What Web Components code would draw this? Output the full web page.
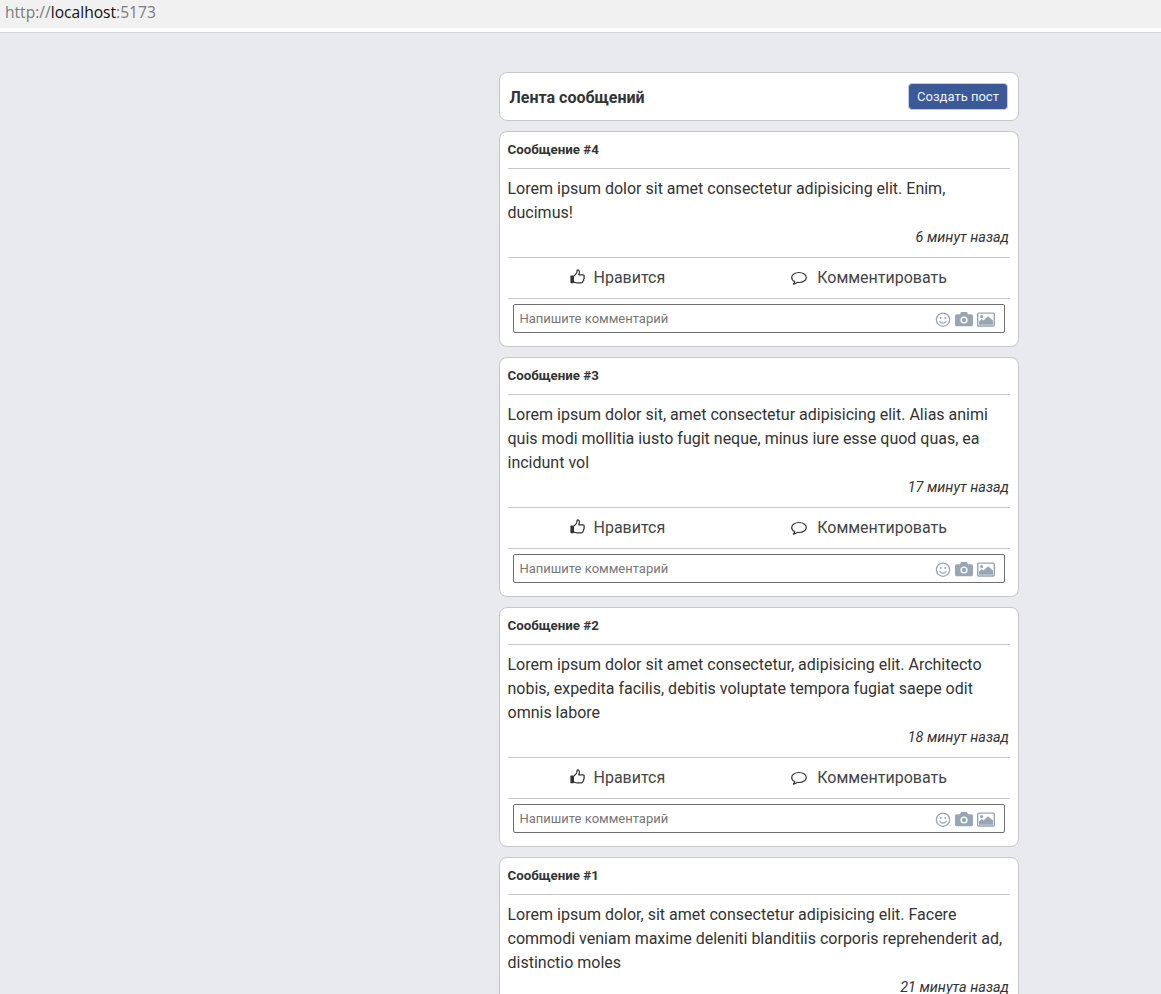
<!DOCTYPE html>
<html lang="ru">
<head>
<meta charset="utf-8">
<title>Лента сообщений</title>
<style>
  html, body { margin: 0; height: 994px; overflow: hidden; }
  body { background: #e9eaee; font-family: Roboto, "Liberation Sans", sans-serif; color: #333; }
</style>
</head>
<body>
<browser-bar>
  <span slot="scheme">http://</span><span slot="host">localhost</span><span slot="port">:5173</span>
</browser-bar>
<feed-page>
  <feed-header heading="Лента сообщений" action="Создать пост"></feed-header>
  <post-card heading="Сообщение #4" time="6 минут назад">Lorem ipsum dolor sit amet consectetur adipisicing elit. Enim, ducimus!</post-card>
  <post-card heading="Сообщение #3" time="17 минут назад">Lorem ipsum dolor sit, amet consectetur adipisicing elit. Alias animi quis modi mollitia iusto fugit neque, minus iure esse quod quas, ea incidunt vol</post-card>
  <post-card heading="Сообщение #2" time="18 минут назад">Lorem ipsum dolor sit amet consectetur, adipisicing elit. Architecto nobis, expedita facilis, debitis voluptate tempora fugiat saepe odit omnis labore</post-card>
  <post-card heading="Сообщение #1" time="21 минута назад">Lorem ipsum dolor, sit amet consectetur adipisicing elit. Facere commodi veniam maxime deleniti blanditiis corporis reprehenderit ad, distinctio moles</post-card>
</feed-page>

<script>
const ICONS = {
  like: `<svg width="15" height="16" viewBox="0.6 0.4 15 16"><rect x="1" y="7" width="3.600" height="7.600" rx=".6" fill="#333"/><path d="M4.600 7.600 7 4.800C7.700 3.900 7.500 2.600 7.800 1.400 9.500 1.100 10.400 2.700 9.900 4.400L9.300 6.200H13.400C14.700 6.200 15.200 7.600 14.500 8.400 15.100 9.100 14.900 10.200 14.200 10.600 14.500 11.400 14.100 12.300 13.400 12.600 13.500 13.600 12.900 14.300 12 14.300H7.600C6.300 14.300 5.600 13.700 4.600 13.600" fill="none" stroke="#333" stroke-width="1.200" stroke-linejoin="round"/></svg>`,
  comment: `<svg width="18" height="16" viewBox="0 -1.300 18 16"><path d="M8 2.200C3.900 2.200.7 4.300.7 7.100c0 1.800 1.200 3.300 3 4.200-.1.900-.6 1.700-1.300 2.600 1.600-.2 3-.9 3.900-1.800.5.1 1.100.1 1.700.1 4.100 0 7.300-2.300 7.300-5.100S12.100 2.200 8 2.200Z" fill="none" stroke="#333" stroke-width="1.200" stroke-linejoin="round"/></svg>`,
  smile: `<svg width="16" height="18" viewBox="0 -1.700 16 18"><circle cx="8" cy="8" r="6.600" fill="none" stroke="#98a5b3" stroke-width="1.300"/><circle cx="5.700" cy="6.300" r="1" fill="#98a5b3"/><circle cx="10.300" cy="6.300" r="1" fill="#98a5b3"/><path d="M4.800 9.600C5.500 10.900 6.700 11.500 8 11.500S10.500 10.900 11.200 9.600" fill="none" stroke="#98a5b3" stroke-width="1.200" stroke-linecap="round"/></svg>`,
  camera: `<svg width="18" height="18" viewBox="0 -1 18 18"><path d="M1.800 3.200H5L6 1H12L13 3.200H16.200C17.300 3.200 18 3.900 18 5V13.500C18 14.600 17.300 15.300 16.200 15.300H1.800C.7 15.300 0 14.600 0 13.500V5C0 3.900 .7 3.200 1.800 3.200Z" fill="#98a5b3"/><circle cx="9" cy="9" r="3.600" fill="#fff"/><circle cx="9" cy="9" r="2.200" fill="#98a5b3"/></svg>`,
  image: `<svg width="18" height="18" viewBox="0 -0.400 18 18"><rect x=".7" y="2.700" width="16.600" height="12.900" rx="1" fill="#fff" stroke="#98a5b3" stroke-width="1.400"/><circle cx="4.600" cy="6.100" r="1.600" fill="#98a5b3"/><path d="M2 14.300V11L4.800 8.700 6.500 10.200 11 5.800 16 10.200V14.300Z" fill="#98a5b3"/></svg>`
};

class BrowserBar extends HTMLElement {
  constructor() {
    super();
    this.attachShadow({ mode: "open" });
    this.shadowRoot.innerHTML = `
      <style>
        :host { display: block; height: 33px; box-sizing: border-box; background: #fcfcfc; border-bottom: 1px solid #d4d5d8; }
        .url { height: 28px; box-sizing: border-box; padding-left: 5px; background: #f1f1f1; color: #7b7b7b;
               font: 15.6px/25px "Open Sans", sans-serif; }
        ::slotted([slot="host"]) { color: #111; }
      </style>
      <div class="url"><slot name="scheme"></slot><slot name="host"></slot><slot name="port"></slot></div>`;
  }
}

class FeedPage extends HTMLElement {
  constructor() {
    super();
    this.attachShadow({ mode: "open" });
    this.shadowRoot.innerHTML = `
      <style>
        :host { display: grid; grid-template-columns: 520px; justify-content: start; padding: 39px 0 0 499px; }
        .list { display: flex; flex-direction: column; gap: 10px; }
      </style>
      <div class="list"><slot></slot></div>`;
  }
}

class FeedHeader extends HTMLElement {
  constructor() {
    super();
    this.attachShadow({ mode: "open" });
  }
  connectedCallback() {
    this.shadowRoot.innerHTML = `
      <style>
        :host { display: flex; align-items: center; justify-content: space-between; height: 49px; box-sizing: border-box;
                padding: 0 10px 0 9.5px; background: #fff; border: 1px solid #c6c7cb; border-radius: 8px; }
        h1 { margin: 0; padding-top: 2px; font-size: 16px; font-weight: 700; color: #333; }
        button { width: 100px; height: 27px; padding: 0; border: 1px solid #c3cbe0; border-radius: 4px; background: #3b5998;
                 color: #f2f4f8; font: 13px Roboto, sans-serif; }
      </style>
      <h1>${this.getAttribute("heading")}</h1>
      <button>${this.getAttribute("action")}</button>`;
  }
}

class ActionButton extends HTMLElement {
  constructor() {
    super();
    this.attachShadow({ mode: "open" });
  }
  connectedCallback() {
    this.shadowRoot.innerHTML = `
      <style>
        :host { display: inline-flex; align-items: center; gap: 8px; font-size: 16px; color: #444; }
        svg { display: block; }
      </style>
      ${ICONS[this.getAttribute("icon")]}<slot></slot>`;
  }
}

class CommentBox extends HTMLElement {
  constructor() {
    super();
    this.attachShadow({ mode: "open" });
    this.shadowRoot.innerHTML = `
      <style>
        :host { display: flex; align-items: center; height: 29px; box-sizing: border-box; margin: 5px 5px 0 5.5px;
                padding: 0 9px 0 5.5px; border: 1px solid #6f6f6f; border-radius: 2px; background: #fff; }
        .hint { flex: 1; font-size: 13px; color: #777; }
        .icons { display: flex; align-items: center; gap: 4px; }
        svg { display: block; }
      </style>
      <span class="hint">Напишите комментарий</span>
      <span class="icons">${ICONS.smile}${ICONS.camera}${ICONS.image}</span>`;
  }
}

class PostCard extends HTMLElement {
  constructor() {
    super();
    this.attachShadow({ mode: "open" });
  }
  connectedCallback() {
    this.shadowRoot.innerHTML = `
      <style>
        :host { display: block; box-sizing: border-box; padding: 0 8px 13px 7.5px; background: #fff;
                border: 1px solid #c6c7cb; border-radius: 8px; }
        h2 { margin: 0; height: 37px; box-sizing: border-box; border-bottom: 1px solid #c8c8c8;
             font-size: 13.3px; line-height: 35px; font-weight: 700; color: #333; }
        .text { padding-top: 8px; font-size: 16px; line-height: 24px; color: #333; }
        .time { height: 33px; box-sizing: border-box; padding-right: 1px; border-bottom: 1px solid #c8c8c8; text-align: right;
                font-size: 14.4px; line-height: 25px; font-style: italic; color: #333; }
        .actions { display: flex; justify-content: space-around; align-items: center; height: 41px; padding-bottom: 2px;
                   box-sizing: border-box; border-bottom: 1px solid #c8c8c8; }
      </style>
      <h2>${this.getAttribute("heading")}</h2>
      <div class="text"><slot></slot></div>
      <div class="time">${this.getAttribute("time")}</div>
      <div class="actions">
        <action-button icon="like">Нравится</action-button>
        <action-button icon="comment">Комментировать</action-button>
      </div>
      <comment-box></comment-box>`;
  }
}

customElements.define("browser-bar", BrowserBar);
customElements.define("feed-page", FeedPage);
customElements.define("feed-header", FeedHeader);
customElements.define("action-button", ActionButton);
customElements.define("comment-box", CommentBox);
customElements.define("post-card", PostCard);
</script>
</body>
</html>
